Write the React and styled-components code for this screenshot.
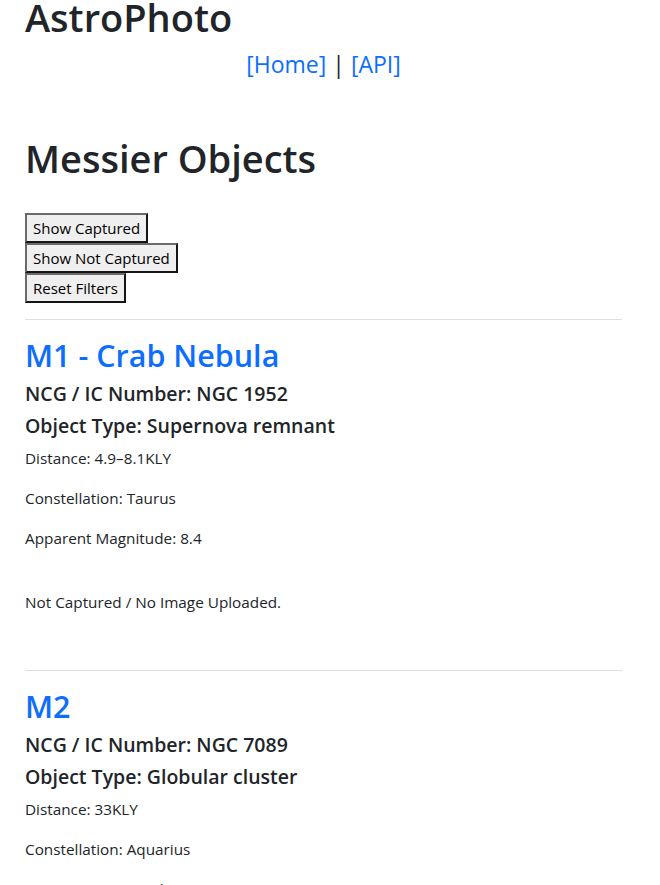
import React from 'react';
import styled, { createGlobalStyle } from 'styled-components';

const GlobalStyle = createGlobalStyle`
  body {
    margin: 0;
    background: #fff;
    color: #212529;
    font-family: "Open Sans", "Noto Sans", sans-serif;
    font-size: 16px;
    line-height: 1.5;
  }
`;

const objects = [
    {
        id: 'M1',
        name: 'Crab Nebula',
        ngc: 'NGC 1952',
        type: 'Supernova remnant',
        distance: '4.9–8.1KLY',
        constellation: 'Taurus',
        magnitude: '8.4',
    },
    {
        id: 'M2',
        name: '',
        ngc: 'NGC 7089',
        type: 'Globular cluster',
        distance: '33KLY',
        constellation: 'Aquarius',
        magnitude: '6.3',
    },
];

const App = () => {
    return (
        <>
            <GlobalStyle />
            <Page>
                <Title>AstroPhoto</Title>
                <Nav>
                    <a href="#home">[Home]</a> | <a href="#api">[API]</a>
                </Nav>
                <Heading>Messier Objects</Heading>
                <Filters>
                    <FilterButton>Show Captured</FilterButton>
                    <FilterButton>Show Not Captured</FilterButton>
                    <FilterButton>Reset Filters</FilterButton>
                </Filters>
                {objects.map((o) => (
                    <Entry key={o.id}>
                        <Divider />
                        <ObjectName href={'#' + o.id}>
                            {o.name ? `${o.id} - ${o.name}` : o.id}
                        </ObjectName>
                        <Detail>NCG / IC Number: {o.ngc}</Detail>
                        <Detail>Object Type: {o.type}</Detail>
                        <Info>Distance: {o.distance}</Info>
                        <Info>Constellation: {o.constellation}</Info>
                        <Info>Apparent Magnitude: {o.magnitude}</Info>
                        <Status>Not Captured / No Image Uploaded.</Status>
                    </Entry>
                ))}
            </Page>
        </>
    );
};

const Page = styled.div`
  padding: 0 38px 0 25px;
`;
const Title = styled.h1`
  margin: -7px 0 0;
  font-size: 38px;
  font-weight: 600;
  line-height: 48px;
`;
const Nav = styled.div`
  margin-top: 10px;
  text-align: center;
  font-size: 23px;
  line-height: 1.2;
  a {
      color: #0d6efd;
      text-decoration: none;
  }
`;
const Heading = styled.h1`
  margin: 55px 0 31px;
  font-size: 38px;
  font-weight: 600;
  line-height: 48px;
`;
const Filters = styled.div`
  display: flex;
  flex-direction: column;
  align-items: flex-start;
  margin-bottom: 16px;
`;
const FilterButton = styled.button`
  font-family: inherit;
  font-size: 15px;
  line-height: 24px;
  padding: 1px 6px;
  background: #efefef;
  color: #000;
  border: 2px outset #6a6a6a;
  border-radius: 0;
`;
const Entry = styled.div`
  padding-bottom: 40px;
`;
const Divider = styled.hr`
  margin: 0 0 16px;
  border: 0;
  border-top: 1px solid rgba(33, 37, 41, 0.15);
`;
const ObjectName = styled.a`
  display: block;
  color: #0d6efd;
  text-decoration: none;
  font-size: 30.5px;
  font-weight: 600;
  line-height: 38px;
  margin-bottom: 8px;
`;
const Detail = styled.h5`
  margin: 0 0 8px;
  font-size: 19.5px;
  font-weight: 600;
  line-height: 24px;
`;
const Info = styled.p`
  margin: 0 0 16px;
  font-size: 15.3px;
  line-height: 24px;
`;
const Status = styled.p`
  margin: 40px 0 16px;
  font-size: 15.3px;
  line-height: 24px;
`;

export default App;
